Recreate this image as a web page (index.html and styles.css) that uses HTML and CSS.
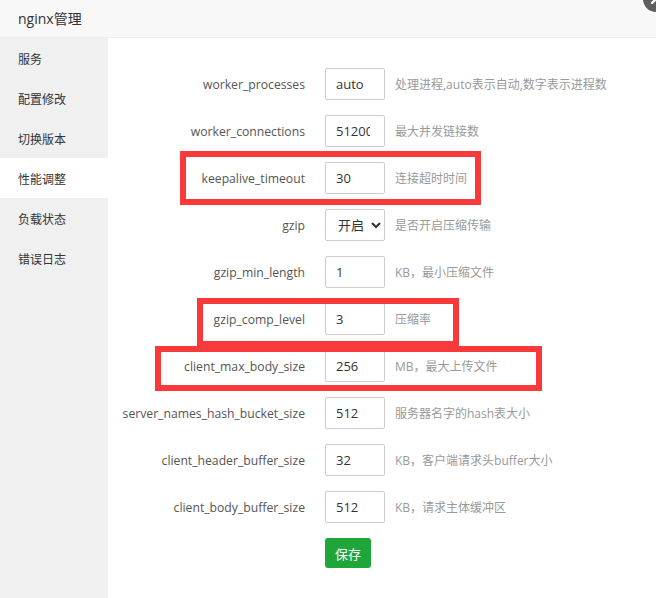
FILE: index.html
```html
<!DOCTYPE html>
<html lang="zh-CN">
<head>
    <meta charset="UTF-8">
    <meta name="viewport" content="width=device-width, initial-scale=1.0">
    <title>nginx管理</title>
    <link rel="stylesheet" href="styles.css">
</head>
<body>

    <div class="layer">
        <div class="layer-title">nginx管理</div>
        <span class="layer-close">
            <svg width="12" height="12" viewBox="0 0 12 12"><path d="M2 2 L10 10 M10 2 L2 10" stroke="#fff" stroke-width="2.4" stroke-linecap="round"/></svg>
        </span>

        <div class="layer-body">
            <ul class="side-menu">
                <li>服务</li>
                <li>配置修改</li>
                <li>切换版本</li>
                <li class="active">性能调整</li>
                <li>负载状态</li>
                <li>错误日志</li>
            </ul>

            <div class="conf-panel">
                <form class="conf-form">
                    <div class="conf-row">
                        <label>worker_processes</label>
                        <input type="text" value="auto">
                        <span class="tips">处理进程,auto表示自动,数字表示进程数</span>
                    </div>
                    <div class="conf-row">
                        <label>worker_connections</label>
                        <input type="text" value="51200">
                        <span class="tips">最大并发链接数</span>
                    </div>
                    <div class="conf-row">
                        <label>keepalive_timeout</label>
                        <input type="text" value="30">
                        <span class="tips">连接超时时间</span>
                    </div>
                    <div class="conf-row">
                        <label>gzip</label>
                        <select>
                            <option selected>开启</option>
                            <option>关闭</option>
                        </select>
                        <span class="tips">是否开启压缩传输</span>
                    </div>
                    <div class="conf-row">
                        <label>gzip_min_length</label>
                        <input type="text" value="1">
                        <span class="tips">KB，最小压缩文件</span>
                    </div>
                    <div class="conf-row">
                        <label>gzip_comp_level</label>
                        <input type="text" value="3">
                        <span class="tips">压缩率</span>
                    </div>
                    <div class="conf-row">
                        <label>client_max_body_size</label>
                        <input type="text" value="256">
                        <span class="tips">MB，最大上传文件</span>
                    </div>
                    <div class="conf-row">
                        <label>server_names_hash_bucket_size</label>
                        <input type="text" value="512">
                        <span class="tips">服务器名字的hash表大小</span>
                    </div>
                    <div class="conf-row">
                        <label>client_header_buffer_size</label>
                        <input type="text" value="32">
                        <span class="tips">KB，客户端请求头buffer大小</span>
                    </div>
                    <div class="conf-row">
                        <label>client_body_buffer_size</label>
                        <input type="text" value="512">
                        <span class="tips">KB，请求主体缓冲区</span>
                    </div>
                    <div class="conf-row">
                        <label></label>
                        <button type="button" class="btn-save">保存</button>
                    </div>
                </form>
            </div>
        </div>

        <!-- 截图上的红框标注 -->
        <div class="mark mark-keepalive"></div>
        <div class="mark mark-comp"></div>
        <div class="mark mark-body"></div>
    </div>

</body>
</html>
```

FILE: styles.css
```css
:root {
    --title-bg: #f8f8f8;
    --side-bg: #f0f0f0;
    --border-color: #ccc;
    --label-color: #555;
    --text-color: #333;
    --tips-color: #999;
    --green: #20a53a;
    --mark-red: #fa3a3a;
    --font-family: "Open Sans", "Noto Sans CJK SC", sans-serif;
}

* {
    margin: 0;
    padding: 0;
    box-sizing: border-box;
}

html, body {
    width: 656px;
    height: 598px;
    overflow: hidden;
    background: #fff;
}

body {
    font-family: var(--font-family);
    font-size: 13px;
    color: var(--text-color);
}

.layer {
    position: relative;
    width: 656px;
    height: 598px;
    display: flex;
    flex-direction: column;
}

/* 标题栏 */
.layer-title {
    height: 38px;
    line-height: 37px;
    padding-left: 18px;
    font-size: 14px;
    color: var(--text-color);
    background: var(--title-bg);
    border-bottom: 1px solid #eee;
}

.layer-close {
    position: absolute;
    left: 640px;
    top: -17px;
    width: 32px;
    height: 32px;
    border-radius: 50%;
    background: #5f5f5f;
    border: 3px solid #fff;
    display: flex;
    align-items: center;
    justify-content: center;
}

.layer-body {
    flex: 1;
    display: flex;
}

/* 左侧菜单 */
.side-menu {
    width: 108px;
    list-style: none;
    background: var(--side-bg);
}

.side-menu li {
    height: 40px;
    line-height: 43px;
    padding-left: 18px;
    font-size: 12px;
    color: var(--text-color);
}

.side-menu li.active {
    background: #fff;
}

/* 配置表单 */
.conf-panel {
    flex: 1;
    padding-top: 30px;
}

.conf-row {
    display: flex;
    align-items: center;
    margin-bottom: 15px;
}

.conf-row label {
    width: 197px;
    flex-shrink: 0;
    text-align: right;
    font-size: 12.2px;
    color: var(--label-color);
    margin-right: 20px;
}

.conf-row input,
.conf-row select {
    width: 60px;
    height: 32px;
    border: 1px solid var(--border-color);
    border-radius: 2px;
    font-family: inherit;
    font-size: 13px;
    color: var(--text-color);
    background: #fff;
    outline: none;
}

.conf-row input {
    padding: 0 14px 0 10px;
}

.conf-row select {
    padding-left: 8px;
}

.tips {
    margin-left: 10px;
    font-size: 12px;
    color: var(--tips-color);
    white-space: nowrap;
}

.btn-save {
    width: 46px;
    height: 30px;
    background: var(--green);
    color: #fff;
    border: none;
    border-radius: 3px;
    font-family: inherit;
    font-size: 13px;
    cursor: pointer;
}

/* 红框标注 */
.mark {
    position: absolute;
    border: 6px solid var(--mark-red);
    pointer-events: none;
}

.mark-keepalive {
    left: 180px;
    top: 151px;
    width: 301px;
    height: 54px;
}

.mark-comp {
    left: 197px;
    top: 298px;
    width: 262px;
    height: 49px;
}

.mark-body {
    left: 155px;
    top: 346px;
    width: 387px;
    height: 45px;
}
```
